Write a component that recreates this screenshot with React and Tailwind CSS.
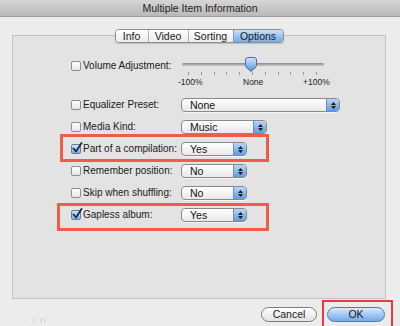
import React from "react";

function Checkbox({ checked }) {
  if (checked) {
    return (
      <div className="relative w-[10px] h-[10px] shrink-0 rounded-[2px] border border-[#5b7fae] bg-gradient-to-b from-[#cfe3f8] to-[#7fb2ea]">
        <svg className="absolute left-[0px] top-[-3px]" width="11" height="12" viewBox="0 0 11 12">
          <path d="M1.5 6.5 L4 9.5 L9.5 1" fill="none" stroke="#1d2a3a" strokeWidth="1.8" strokeLinecap="round" strokeLinejoin="round" />
        </svg>
      </div>
    );
  }
  return (
    <div className="w-[10px] h-[10px] shrink-0 rounded-[2px] border border-[#8e8e8e] bg-gradient-to-b from-[#ffffff] to-[#e6e6e6]" />
  );
}

function Popup({ text, width }) {
  return (
    <div
      className="h-[14px] flex items-stretch rounded-[4px] border border-[#8a8a8a] bg-gradient-to-b from-[#ffffff] to-[#e9e9e9] overflow-hidden shadow-[0_1px_0_rgba(255,255,255,0.6)]"
      style={{ width }}
    >
      <div className="flex-1 flex items-center pl-[8px] text-[10.5px] leading-none text-[#111]">{text}</div>
      <div className="w-[13px] flex flex-col items-center justify-center gap-[1px] border-l border-[#6f8fbf] bg-gradient-to-b from-[#b8d6f6] to-[#5f9be0]">
        <svg width="5" height="3" viewBox="0 0 5 3"><path d="M0 3 L2.5 0 L5 3 Z" fill="#1b1b1b" /></svg>
        <svg width="5" height="3" viewBox="0 0 5 3"><path d="M0 0 L2.5 3 L5 0 Z" fill="#1b1b1b" /></svg>
      </div>
    </div>
  );
}

function Row({ label, checked, children }) {
  return (
    <div className="flex items-center h-[14px]">
      <div className="w-[110px] flex items-center gap-[2px]">
        <Checkbox checked={checked} />
        <span className="text-[10px] leading-none text-[#1a1a1a] whitespace-nowrap">{label}</span>
      </div>
      {children}
    </div>
  );
}

export default function App() {
  const ticks = Array.from({ length: 11 }, (_, i) => i);
  return (
    <div className="w-[400px] h-[326px] bg-[#ececec] relative overflow-hidden font-['Liberation_Sans',Arial,sans-serif]">
      {/* title bar */}
      <div className="h-[17px] bg-gradient-to-b from-[#d6d6d6] to-[#b9b9b9] border-b border-[#9c9c9c] flex items-center justify-center">
        <span className="text-[10.5px] leading-none text-[#222] pt-[1px]">Multiple Item Information</span>
      </div>

      <div className="pt-[18px] pl-[12px]">
        <div className="w-[374px] h-[264px] border border-[#c2c2c2] bg-[#e3e3e3] flex flex-col">
          {/* tabs */}
          <div className="flex justify-center -mt-[7px]">
            <div className="flex h-[14px] rounded-[4px] border border-[#8d8d8d] overflow-hidden text-[10.5px] leading-none text-[#1a1a1a] shadow-[0_1px_1px_rgba(0,0,0,0.15)]">
              <div className="w-[33px] flex items-center justify-center bg-gradient-to-b from-[#ffffff] to-[#ececec] border-r border-[#b0b0b0]">Info</div>
              <div className="w-[40px] flex items-center justify-center bg-gradient-to-b from-[#ffffff] to-[#ececec] border-r border-[#b0b0b0]">Video</div>
              <div className="w-[45px] flex items-center justify-center bg-gradient-to-b from-[#ffffff] to-[#ececec] border-r border-[#7f9cc4]">Sorting</div>
              <div className="w-[49px] flex items-center justify-center bg-gradient-to-b from-[#c9e1f9] to-[#72ace8]">Options</div>
            </div>
          </div>

          <div className="pl-[58px] flex flex-col">
            {/* volume row */}
            <div className="flex mt-[14px]">
              <div className="w-[110px] h-[17px] flex items-center gap-[2px]">
                <Checkbox checked={false} />
                <span className="text-[10px] leading-none text-[#1a1a1a] whitespace-nowrap">Volume Adjustment:</span>
              </div>
              <div className="relative w-[143px] h-[32px]">
                <div className="absolute left-[1px] right-0 top-[6px] h-[3px] rounded-full bg-gradient-to-b from-[#8a8a8a] to-[#c9c9c9]" />
                <svg className="absolute left-[63px] top-[0px]" width="14" height="16" viewBox="0 0 14 16">
                  <defs>
                    <linearGradient id="kn" x1="0" y1="0" x2="0" y2="1">
                      <stop offset="0" stopColor="#d6e9fb" />
                      <stop offset="1" stopColor="#4f8fda" />
                    </linearGradient>
                  </defs>
                  <path d="M1.5 3 Q1.5 0.5 4 0.5 L10 0.5 Q12.5 0.5 12.5 3 L12.5 8 Q12.5 9.5 11 11 L7 14.5 L3 11 Q1.5 9.5 1.5 8 Z" fill="url(#kn)" stroke="#4a6f9e" strokeWidth="1" />
                </svg>
                {ticks.map((i) => (
                  <div
                    key={i}
                    className="absolute top-[15px] w-[1px] h-[3px] bg-[#9a9a9a]"
                    style={{ left: 7 + i * 12.8 }}
                  />
                ))}
                <span className="absolute top-[21px] left-[-3px] text-[8.5px] leading-none text-[#222]">-100%</span>
                <span className="absolute top-[21px] left-[62px] text-[8.5px] leading-none text-[#222]">None</span>
                <span className="absolute top-[21px] left-[122px] text-[8.5px] leading-none text-[#222]">+100%</span>
              </div>
            </div>

            <div className="flex flex-col gap-[8px] mt-[9px]">
              <Row label="Equalizer Preset:">
                <Popup text="None" width={159} />
              </Row>
              <Row label="Media Kind:">
                <Popup text="Music" width={86} />
              </Row>
              <Row label="Part of a compilation:" checked>
                <Popup text="Yes" width={66} />
              </Row>
              <Row label="Remember position:">
                <Popup text="No" width={66} />
              </Row>
              <Row label="Skip when shuffling:">
                <Popup text="No" width={66} />
              </Row>
              <Row label="Gapless album:" checked>
                <Popup text="Yes" width={66} />
              </Row>
            </div>
          </div>
        </div>
      </div>

      {/* buttons */}
      <div className="flex justify-end gap-[10px] pr-[15px] mt-[8px]">
        <div className="w-[56px] h-[15px] rounded-full border border-[#7c7c7c] bg-gradient-to-b from-[#ffffff] to-[#e2e2e2] flex items-center justify-center text-[10.5px] leading-none text-[#1a1a1a]">Cancel</div>
        <div className="w-[58px] h-[15px] rounded-full border border-[#55789f] bg-gradient-to-b from-[#d9ebfc] to-[#6daaea] flex items-center justify-center text-[10.5px] leading-none text-[#111]">OK</div>
      </div>

      <div className="absolute left-[25px] top-[317px] text-[7px] leading-none text-[#bdbdbd] tracking-[2px]">. i ll</div>

      {/* annotation boxes */}
      <div className="absolute left-[60px] top-[134px] w-[209px] h-[28px] border-[3px] border-[#ef5d4a]" />
      <div className="absolute left-[57px] top-[203px] w-[212px] h-[28px] border-[3px] border-[#ef5d4a]" />
      <div className="absolute left-[322px] top-[300px] w-[71px] h-[30px] border-[2px] border-[#ea3a3f]" />
    </div>
  );
}
